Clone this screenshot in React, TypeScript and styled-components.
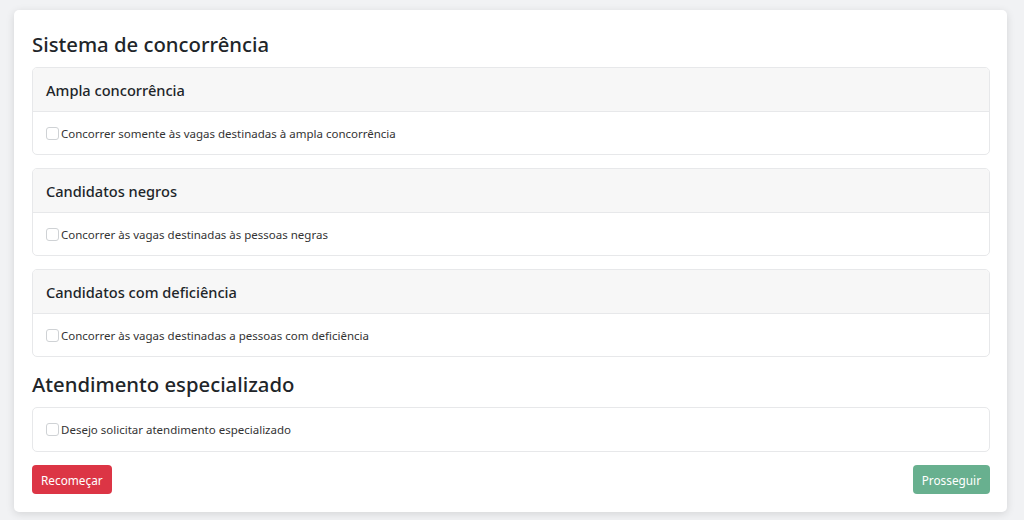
import React from "react";
import styled, { createGlobalStyle } from "styled-components";

const GlobalStyle = createGlobalStyle`
  html, body {
    margin: 0;
    padding: 0;
    background: #f1f2f4;
    font-family: "Noto Sans", "Open Sans", sans-serif;
    color: #212529;
  }
  * { box-sizing: border-box; }
`;

const Page = styled.div`
  padding: 10px 17px 8px 14px;
  height: 520px;
`;

const Panel = styled.div`
  background: #fff;
  border-radius: 5px;
  box-shadow: 0 2px 8px rgba(0, 0, 0, 0.12);
  padding: 20px 17px 18px 18px;
  display: flex;
  flex-direction: column;
`;

const Title = styled.h4`
  margin: 0 0 9px;
  font-size: 20.3px;
  font-weight: 500;
  height: 28px;
  display: flex;
  align-items: center;
`;

const Card = styled.div`
  border: 1px solid #e7e8ea;
  border-radius: 5px;
  margin-bottom: 13px;
  overflow: hidden;
`;

const CardHeader = styled.div`
  background: #f7f7f7;
  border-bottom: 1px solid #e7e8ea;
  height: 44px;
  padding: 0 13px;
  display: flex;
  align-items: center;
  font-size: 14.6px;
  font-weight: 500;
`;

const CardBody = styled.label<{ $h?: number }>`
  height: ${(p) => p.$h ?? 42}px;
  padding: 0 13px;
  display: flex;
  align-items: center;
  gap: 2px;
  font-size: 11.5px;
  color: #333;
`;

const Check = styled.input.attrs({ type: "checkbox" })`
  appearance: none;
  margin: 0;
  width: 13px;
  height: 13px;
  border: 1px solid #cfd2d5;
  border-radius: 3px;
  background: #fff;
`;

const Actions = styled.div`
  display: flex;
  justify-content: space-between;
`;

const Button = styled.button<{ $variant: "danger" | "success"; $disabled?: boolean }>`
  height: 29px;
  padding: 0 9px;
  border: none;
  border-radius: 4px;
  font-family: inherit;
  font-size: 11.8px;
  color: #fff;
  background: ${(p) => (p.$variant === "danger" ? "#dc3545" : "#198754")};
  opacity: ${(p) => (p.$disabled ? 0.65 : 1)};
`;

const sections = [
  { title: "Ampla concorrência", label: "Concorrer somente às vagas destinadas à ampla concorrência" },
  { title: "Candidatos negros", label: "Concorrer às vagas destinadas às pessoas negras" },
  { title: "Candidatos com deficiência", label: "Concorrer às vagas destinadas a pessoas com deficiência" },
];

export default function App() {
  return (
    <Page>
      <GlobalStyle />
      <Panel>
        <Title>Sistema de concorrência</Title>
        {sections.map((s) => (
          <Card key={s.title}>
            <CardHeader>{s.title}</CardHeader>
            <CardBody>
              <Check />
              {s.label}
            </CardBody>
          </Card>
        ))}
        <Title>Atendimento especializado</Title>
        <Card>
          <CardBody $h={43}>
            <Check />
            Desejo solicitar atendimento especializado
          </CardBody>
        </Card>
        <Actions>
          <Button $variant="danger">Recomeçar</Button>
          <Button $variant="success" $disabled>
            Prosseguir
          </Button>
        </Actions>
      </Panel>
    </Page>
  );
}
